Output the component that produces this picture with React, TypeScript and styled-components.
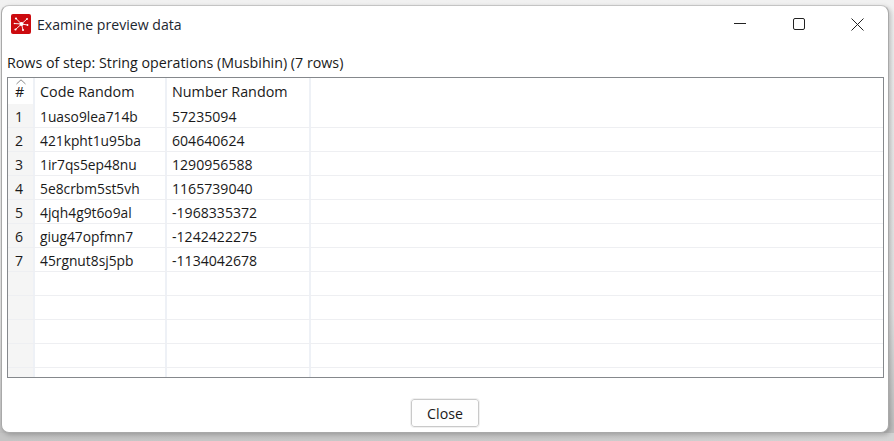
import styled, { createGlobalStyle } from 'styled-components';

const GlobalStyle = createGlobalStyle`
  html, body {
    margin: 0;
    padding: 0;
    width: 894px;
    height: 441px;
    overflow: hidden;
  }
  body {
    background: linear-gradient(180deg, #f1f1f1 0%, #e4e4e4 70%, #bdbdbd 100%);
    font-family: "Open Sans", "Noto Sans", sans-serif;
    color: #1a1a1a;
  }
`;

const COLUMNS = '27px 132px 144px 1fr';

const Desktop = styled.div`
  width: 894px;
  height: 441px;
  box-sizing: border-box;
  padding: 5px 5px 8px 1px;
  background: linear-gradient(90deg, #c4c4c4 0%, #c9c9c9 60%, #d4d4d4 100%) bottom / 100% 8px no-repeat;
`;

const Window = styled.div`
  height: 100%;
  box-sizing: border-box;
  display: flex;
  flex-direction: column;
  background: #fff;
  border: 1px solid #a9a9a9;
  border-top-color: #c4c4c4;
  border-radius: 8px;
  box-shadow: 2px 2px 5px rgba(0, 0, 0, 0.22);
`;

const TitleBar = styled.div`
  height: 36px;
  flex: none;
  display: flex;
  align-items: center;
  padding-left: 9px;
`;

const TitleText = styled.span`
  margin-left: 6px;
  font-size: 14.1px;
  color: #1c2630;
`;

const WindowControls = styled.div`
  margin-left: auto;
  display: flex;
  margin-right: 1px;
`;

const ControlButton = styled.div`
  width: 59px;
  height: 36px;
  display: flex;
  align-items: center;
  justify-content: center;
`;

const StepLabel = styled.div`
  height: 18px;
  flex: none;
  margin: 12px 0 0 5px;
  font-size: 14.25px;
  line-height: 18px;
  white-space: nowrap;
`;

const Table = styled.div`
  flex: 1;
  min-height: 0;
  margin: 5px 4px 0 5px;
  border: 1px solid #85888c;
  overflow: hidden;
`;

const Row = styled.div<{ $header?: boolean }>`
  display: grid;
  grid-template-columns: ${COLUMNS};
  height: ${(p) => (p.$header ? '26px' : '24px')};
  box-sizing: border-box;
  border-bottom: ${(p) => (p.$header ? 'none' : '1px solid #eeeff2')};
`;

const Cell = styled.div<{ $index?: boolean; $header?: boolean; $code?: boolean }>`
  position: relative;
  box-sizing: border-box;
  padding: ${(p) => (p.$header ? '1px' : '2px')} 0 0 ${(p) => (p.$index ? '7px' : '5px')};
  border-right: 2px solid #eef1f6;
  background: ${(p) => (p.$index && !p.$header ? '#f5f5f5' : '#fff')};
  font-size: ${(p) => (p.$header ? '14.35px' : p.$code ? '13.8px' : '14.1px')};
  line-height: ${(p) => (p.$header ? '25px' : '21px')};
  white-space: nowrap;
  &:last-child {
    border-right: none;
  }
`;

const SortCaret = styled.svg`
  position: absolute;
  top: 1px;
  left: 8px;
`;

const Footer = styled.div`
  height: 54px;
  flex: none;
  display: flex;
  justify-content: center;
  padding-top: 21px;
  box-sizing: border-box;
`;

const CloseButton = styled.button`
  width: 68px;
  height: 28px;
  box-sizing: border-box;
  padding: 0;
  background: #fefefe;
  border: 1px solid #c9c9c9;
  border-radius: 3px;
  outline: 1px solid #f0f0f0;
  font-family: inherit;
  font-size: 14.2px;
  color: #1a1a1a;
`;

const rows = [
  ['1', '1uaso9lea714b', '57235094'],
  ['2', '421kpht1u95ba', '604640624'],
  ['3', '1ir7qs5ep48nu', '1290956588'],
  ['4', '5e8crbm5st5vh', '1165739040'],
  ['5', '4jqh4g9t6o9al', '-1968335372'],
  ['6', 'giug47opfmn7', '-1242422275'],
  ['7', '45rgnut8sj5pb', '-1134042678'],
  ['', '', ''],
  ['', '', ''],
  ['', '', ''],
  ['', '', ''],
  ['', '', ''],
];

function AppIcon() {
  return (
    <svg width="20" height="20" viewBox="0 0 20 20">
      <rect width="20" height="20" rx="2" fill="#cc0a0f" />
      <path
        d="M10.5 10 L5 4.5 M10.5 10 L16 5 M10.5 10 L16.5 11 M10.5 10 L12 16 M10.5 10 L4.5 15.5 M10.5 10 L3.5 9.5"
        stroke="#fff"
        strokeWidth="0.9"
        strokeLinecap="round"
      />
      <g fill="#fff">
        <circle cx="10.5" cy="10" r="2" />
        <circle cx="5" cy="4.5" r="1.1" />
        <circle cx="16" cy="5" r="0.9" />
        <circle cx="16.5" cy="11" r="0.9" />
        <circle cx="12" cy="16" r="1" />
        <circle cx="4.5" cy="15.5" r="1.1" />
        <circle cx="3.5" cy="9.5" r="0.8" />
      </g>
    </svg>
  );
}

export default function App() {
  return (
    <>
      <GlobalStyle />
      <Desktop>
        <Window>
          <TitleBar>
            <AppIcon />
            <TitleText>Examine preview data</TitleText>
            <WindowControls>
              <ControlButton>
                <svg width="12" height="12" viewBox="0 0 12 12">
                  <path d="M0 5.5 H12" stroke="#222" strokeWidth="1" />
                </svg>
              </ControlButton>
              <ControlButton>
                <svg width="12" height="12" viewBox="0 0 12 12">
                  <rect x="0.5" y="0.5" width="11" height="11" rx="1.5" fill="none" stroke="#222" strokeWidth="1" />
                </svg>
              </ControlButton>
              <ControlButton>
                <svg width="13" height="13" viewBox="0 0 13 13">
                  <path d="M0.5 0.5 L12.5 12.5 M12.5 0.5 L0.5 12.5" stroke="#222" strokeWidth="1" />
                </svg>
              </ControlButton>
            </WindowControls>
          </TitleBar>
          <StepLabel>Rows of step: String operations (Musbihin) (7 rows)</StepLabel>
          <Table>
            <Row $header>
              <Cell $index $header>
                <SortCaret width="10" height="6" viewBox="0 0 10 6">
                  <path d="M0.5 5 L5 0.8 L9.5 5" fill="none" stroke="#8a8a8a" strokeWidth="1" />
                </SortCaret>
                #
              </Cell>
              <Cell $header>Code Random</Cell>
              <Cell $header>Number Random</Cell>
              <Cell $header />
            </Row>
            {rows.map((row, i) => (
              <Row key={i}>
                <Cell $index>{row[0]}</Cell>
                <Cell $code>{row[1]}</Cell>
                <Cell>{row[2]}</Cell>
                <Cell />
              </Row>
            ))}
          </Table>
          <Footer>
            <CloseButton>Close</CloseButton>
          </Footer>
        </Window>
      </Desktop>
    </>
  );
}
